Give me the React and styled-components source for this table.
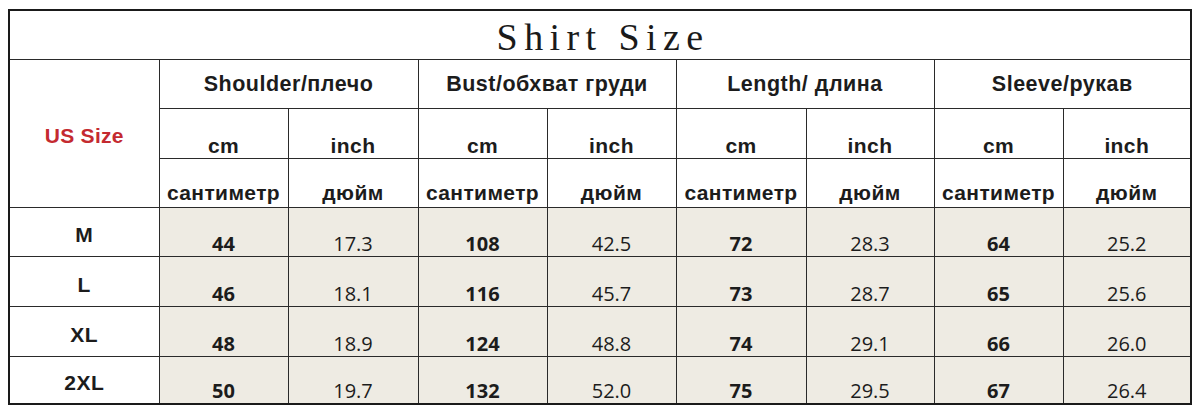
import React from "react";
import styled, { createGlobalStyle } from "styled-components";

const Global = createGlobalStyle`
  html, body { margin: 0; padding: 0; background: #ffffff; }
  body { padding: 9px 0 0 8px; }
`;

const Table = styled.table`
  border-collapse: collapse;
  table-layout: fixed;
  width: 1182px;
  border: 2.5px solid #1a1a1a;
  color: #1c1c1c;
  font-family: "Liberation Sans", Arial, sans-serif;
`;

const Cell = styled.td`
  border: 1.5px solid #2a2a2a;
  padding: 0;
  text-align: center;
  height: ${(p) => p.$h || 47.5}px;
  vertical-align: ${(p) => p.$valign || "middle"};
  background: ${(p) => (p.$shade ? "#eeebe3" : "#ffffff")};
`;

const TitleText = styled.div`
  font-family: "Liberation Serif", "Times New Roman", serif;
  font-size: 38px;
  letter-spacing: 6.4px;
  padding-left: 6px;
  line-height: 1;
  color: #1a1a1a;
  padding-top: 3px;
`;

const GroupLabel = styled.div`
  font-size: 21.5px;
  font-weight: 700;
  letter-spacing: 0.5px;
  padding-top: 1px;
`;

const UnitLabel = styled.div`
  font-size: 21px;
  font-weight: 700;
  letter-spacing: 0.4px;
  line-height: 1;
  padding-bottom: ${(p) => p.$pb}px;
`;

const SizeHeading = styled.div`
  font-size: 21px;
  font-weight: 700;
  color: #c42a30;
  letter-spacing: 0.3px;
  padding-top: 5px;
`;

const SizeLabel = styled.div`
  font-size: 21px;
  font-weight: 700;
  letter-spacing: 0.5px;
  padding-top: 7px;
`;

const Num = styled.div`
  font-family: "Open Sans", "Noto Sans", sans-serif;
  font-size: 20px;
  font-weight: ${(p) => (p.$bold ? 700 : 500)};
  line-height: 1;
  padding-bottom: 2px;
`;

const groups = ["Shoulder/плечо", "Bust/обхват груди", "Length/ длина", "Sleeve/рукав"];

const rows = [
  { size: "M", h: 48.5, vals: ["44", "17.3", "108", "42.5", "72", "28.3", "64", "25.2"] },
  { size: "L", h: 48.5, vals: ["46", "18.1", "116", "45.7", "73", "28.7", "65", "25.6"] },
  { size: "XL", h: 49.5, vals: ["48", "18.9", "124", "48.8", "74", "29.1", "66", "26.0"] },
  { size: "2XL", h: 45.5, vals: ["50", "19.7", "132", "52.0", "75", "29.5", "67", "26.4"] },
];

const widths = [150, 129, 130, 129, 129, 130, 128, 129, 128];

export default function App() {
  return (
    <>
      <Global />
      <Table>
        <colgroup>
          {widths.map((w, i) => (
            <col key={i} style={{ width: w }} />
          ))}
        </colgroup>
        <tbody>
          <tr>
            <Cell colSpan={9} $h={48}>
              <TitleText>Shirt Size</TitleText>
            </Cell>
          </tr>
          <tr>
            <Cell rowSpan={3}>
              <SizeHeading>US Size</SizeHeading>
            </Cell>
            {groups.map((g) => (
              <Cell key={g} colSpan={2} $h={47.5}>
                <GroupLabel>{g}</GroupLabel>
              </Cell>
            ))}
          </tr>
          <tr>
            {groups.map((g) => (
              <React.Fragment key={g}>
                <Cell $h={49.5} $valign="bottom">
                  <UnitLabel $pb={2}>cm</UnitLabel>
                </Cell>
                <Cell $h={49.5} $valign="bottom">
                  <UnitLabel $pb={2}>inch</UnitLabel>
                </Cell>
              </React.Fragment>
            ))}
          </tr>
          <tr>
            {groups.map((g) => (
              <React.Fragment key={g}>
                <Cell $h={47.5} $valign="bottom">
                  <UnitLabel $pb={4}>сантиметр</UnitLabel>
                </Cell>
                <Cell $h={47.5} $valign="bottom">
                  <UnitLabel $pb={4}>дюйм</UnitLabel>
                </Cell>
              </React.Fragment>
            ))}
          </tr>
          {rows.map((r) => (
            <tr key={r.size}>
              <Cell $h={r.h}>
                <SizeLabel>{r.size}</SizeLabel>
              </Cell>
              {r.vals.map((v, i) => (
                <Cell key={i} $h={r.h} $shade $valign="bottom">
                  <Num $bold={i % 2 === 0}>{v}</Num>
                </Cell>
              ))}
            </tr>
          ))}
        </tbody>
      </Table>
    </>
  );
}
